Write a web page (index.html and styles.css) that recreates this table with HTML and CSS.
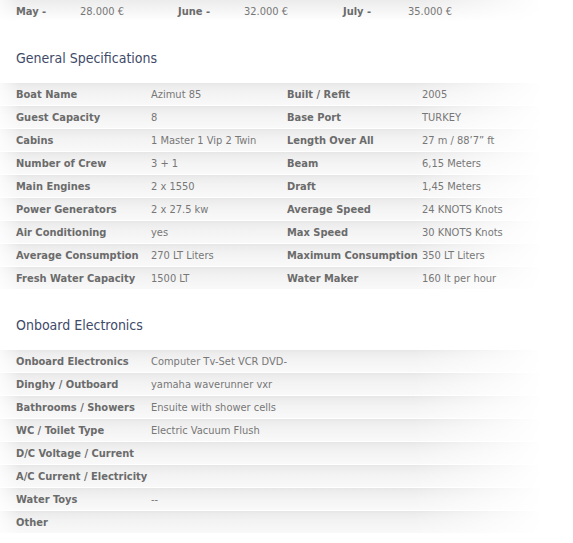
FILE: index.html
```html
<!DOCTYPE html>
<html>
<head>
<meta charset="utf-8">
<link rel="stylesheet" href="styles.css">
</head>
<body>
<div class="prices">
  <div class="pcell p1 lbl">May -</div>
  <div class="pcell p2 val">28.000 €</div>
  <div class="pcell p3 lbl">June -</div>
  <div class="pcell p4 val">32.000 €</div>
  <div class="pcell p5 lbl">July -</div>
  <div class="pcell p6 val">35.000 €</div>
</div>

<h2 class="title">General Specifications</h2>
<div class="spec">
  <div class="row"><span class="lbl">Boat Name</span><span class="val">Azimut 85</span><span class="lbl">Built / Refit</span><span class="val">2005</span></div>
  <div class="row"><span class="lbl">Guest Capacity</span><span class="val">8</span><span class="lbl">Base Port</span><span class="val">TURKEY</span></div>
  <div class="row"><span class="lbl">Cabins</span><span class="val">1 Master 1 Vip 2 Twin</span><span class="lbl">Length Over All</span><span class="val">27 m / 88’7” ft</span></div>
  <div class="row"><span class="lbl">Number of Crew</span><span class="val">3 + 1</span><span class="lbl">Beam</span><span class="val">6,15 Meters</span></div>
  <div class="row"><span class="lbl">Main Engines</span><span class="val">2 x 1550</span><span class="lbl">Draft</span><span class="val">1,45 Meters</span></div>
  <div class="row"><span class="lbl">Power Generators</span><span class="val">2 x 27.5 kw</span><span class="lbl">Average Speed</span><span class="val">24 KNOTS Knots</span></div>
  <div class="row"><span class="lbl">Air Conditioning</span><span class="val">yes</span><span class="lbl">Max Speed</span><span class="val">30 KNOTS Knots</span></div>
  <div class="row"><span class="lbl">Average Consumption</span><span class="val">270 LT Liters</span><span class="lbl">Maximum Consumption</span><span class="val">350 LT Liters</span></div>
  <div class="row"><span class="lbl">Fresh Water Capacity</span><span class="val">1500 LT</span><span class="lbl">Water Maker</span><span class="val">160 lt per hour</span></div>
</div>

<h2 class="title">Onboard Electronics</h2>
<div class="spec">
  <div class="row"><span class="lbl">Onboard Electronics</span><span class="val">Computer Tv-Set VCR DVD-</span></div>
  <div class="row"><span class="lbl">Dinghy / Outboard</span><span class="val">yamaha waverunner vxr</span></div>
  <div class="row"><span class="lbl">Bathrooms / Showers</span><span class="val">Ensuite with shower cells</span></div>
  <div class="row"><span class="lbl">WC / Toilet Type</span><span class="val">Electric Vacuum Flush</span></div>
  <div class="row"><span class="lbl">D/C Voltage / Current</span><span class="val"></span></div>
  <div class="row"><span class="lbl">A/C Current / Electricity</span><span class="val"></span></div>
  <div class="row"><span class="lbl">Water Toys</span><span class="val">--</span></div>
  <div class="row"><span class="lbl">Other</span><span class="val"></span></div>
</div>
</body>
</html>
```

FILE: styles.css
```css
html, body {
  margin: 0;
  padding: 0;
  background: #fff;
}
body {
  font-family: "DejaVu Sans Condensed", "DejaVu Sans", sans-serif;
  font-stretch: condensed;
  font-size: 11px;
  color: #777;
}
.prices {
  display: flex;
  width: 542px;
  height: 23px;
  background:
    linear-gradient(to right, rgba(255,255,255,0.7) 0, rgba(255,255,255,0) 18px, rgba(255,255,255,0) 78%, #fff 100%),
    linear-gradient(to bottom, #ececec 0, #f4f4f4 40%, #fff 92%, #fff 100%);
}
.pcell {
  box-sizing: border-box;
  padding-left: 16px;
  padding-top: 1px;
  line-height: 22px;
  height: 23px;
  white-space: nowrap;
}
.p1 { width: 64px; }
.p2 { width: 98px; }
.p3 { width: 66px; }
.p4 { width: 99px; }
.p5 { width: 65px; }
.p6 { flex: 1; }
.lbl {
  font-weight: bold;
  color: #6b6b6b;
}
.val {
  color: #777;
}
.title {
  margin: 0;
  box-sizing: border-box;
  height: 60px;
  padding: 26px 16px 0;
  font-size: 14px;
  line-height: 18px;
  font-weight: normal;
  color: #3e4a68;
}
.spec {
  width: 542px;
}
.row {
  display: grid;
  grid-template-columns: 135px 136px 135px 136px;
  height: 22px;
  border-bottom: 1px solid #fff;
  background:
    linear-gradient(to right, rgba(255,255,255,0.75) 0, rgba(255,255,255,0) 20px, rgba(255,255,255,0) 76%, #fff 100%),
    linear-gradient(to bottom, #e6e6e6 0, #ececec 12%, #f3f3f3 45%, #f9f9f9 100%);
}
.row span {
  box-sizing: border-box;
  padding-left: 16px;
  padding-top: 1px;
  line-height: 22px;
  white-space: nowrap;
}
```
